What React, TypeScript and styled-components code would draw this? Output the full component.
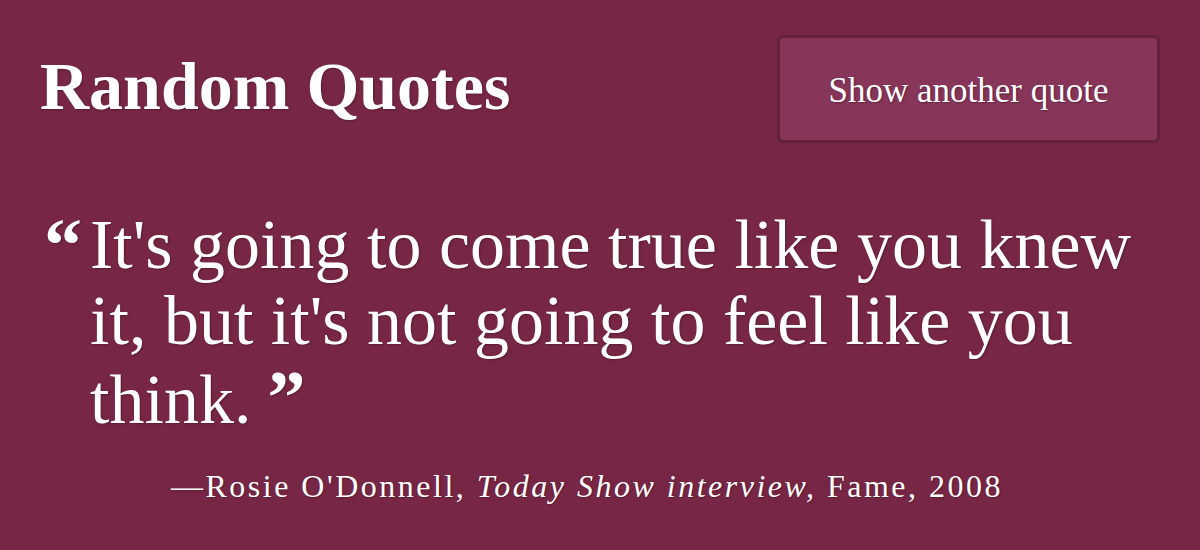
import React from "react";
import styled, { createGlobalStyle } from "styled-components";

const GlobalStyle = createGlobalStyle`
  html, body {
    margin: 0;
    padding: 0;
    background: #772745;
  }
  body {
    font-family: "Liberation Serif", "Times New Roman", serif;
    color: #ffffff;
  }
`;

const quote = {
  text: "It's going to come true like you knew it, but it's not going to feel like you think.",
  author: "Rosie O'Donnell",
  source: "Today Show interview",
  tag: "Fame",
  year: "2008",
};

const App: React.FC = () => {
  return (
    <Page>
      <GlobalStyle />
      <Header>
        <Title>Random Quotes</Title>
        <Button type="button">Show another quote</Button>
      </Header>
      <QuoteRow>
        <OpenMark>“</OpenMark>
        <QuoteText>
          {quote.text}
          <CloseMark>”</CloseMark>
        </QuoteText>
      </QuoteRow>
      <Attribution>
        —{quote.author}, <em>{quote.source},</em> {quote.tag}, {quote.year}
      </Attribution>
    </Page>
  );
};

export default App;

const Page = styled.div`
  width: 1200px;
  height: 550px;
  box-sizing: border-box;
  background: #772745;
  text-shadow: 1px 1px 2px rgba(40, 0, 15, 0.35);
  overflow: hidden;
`;

const Header = styled.div`
  display: flex;
  justify-content: space-between;
  align-items: center;
  padding: 35px 40px 0 40px;
`;

const Title = styled.h1`
  margin: -6px 0 0 0;
  font-size: 68px;
  font-weight: 700;
  line-height: 1;
`;

const Button = styled.button`
  width: 383px;
  height: 108px;
  box-sizing: border-box;
  padding-top: 4px;
  background: #87365a;
  border: 3px solid #62223c;
  border-radius: 6px;
  color: #ffffff;
  font-family: "Liberation Serif", "Times New Roman", serif;
  font-size: 35px;
  text-shadow: 1px 1px 2px rgba(40, 0, 15, 0.4);
  cursor: pointer;
`;

const QuoteRow = styled.div`
  display: flex;
  padding: 64px 40px 0 40px;
`;

const OpenMark = styled.span`
  flex: 0 0 50px;
  margin-left: 4px;
  font-size: 76px;
  line-height: 76px;
  font-weight: 700;
`;

const QuoteText = styled.p`
  margin: 0 0 0 -4px;
  flex: 1;
  font-size: 70px;
  line-height: 76px;
`;

const CloseMark = styled.span`
  font-weight: 700;
  font-size: 76px;
  margin-left: 16px;
`;

const Attribution = styled.p`
  margin: 28px 0 0 0;
  padding-right: 26px;
  text-align: center;
  font-size: 32px;
  line-height: 40px;
  letter-spacing: 2.5px;

  em {
    font-style: italic;
  }
`;
